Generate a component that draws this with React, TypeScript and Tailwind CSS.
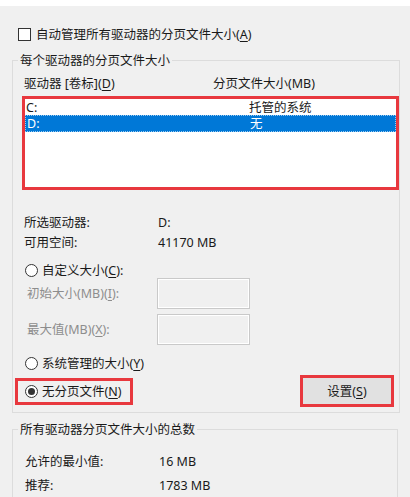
import React from 'react';

// Virtual memory dialog (Windows) — paging file settings per drive.

const RED = 'border-[#e8383e]';

function Key({ k }: { k: string }) {
    return <>(<span className="underline underline-offset-2">{k}</span>)</>;
}

function Radio({ checked = false }: { checked?: boolean }) {
    return (
        <span className="w-[13px] h-[13px] rounded-full border border-[#333] bg-white flex items-center justify-center shrink-0">
            {checked && <span className="w-[7px] h-[7px] rounded-full bg-[#333]" />}
        </span>
    );
}

function InfoRow({ label, value, h = 'h-[20px]' }: { label: string; value: string; h?: string }) {
    return (
        <div className={`flex items-center ${h}`}>
            <span className="w-[134px]">{label}</span>
            <span>{value}</span>
        </div>
    );
}

function SizeInput({ label, k }: { label: string; k: string }) {
    return (
        <div className="flex items-center h-[31px] pl-[3px]">
            <span className="w-[130px] text-[#8d8d8d]">{label}<Key k={k} />:</span>
            <span className="w-[93px] h-[31px] border border-[#c9c9c9] bg-[#f0f0f0] shadow-[inset_0_0_0_1px_#ffffff]" />
        </div>
    );
}

export default function App() {
    const drives = [
        { drive: 'C:', size: '托管的系统', selected: false },
        { drive: 'D:', size: '无', selected: true },
    ];

    return (
        <div className="w-[410px] h-[497px] overflow-hidden bg-[#f0f0f0] text-[#1a1a1a] text-[12.5px] leading-[17px] font-['Noto_Sans','Noto_Sans_CJK_SC',sans-serif]">
            <div className="h-[6px] bg-white" />

            {/* auto manage */}
            <div className="mt-[20px] ml-[18px] flex items-center gap-[5px] h-[17px]">
                <span className="w-[13px] h-[13px] border border-[#333] bg-white shrink-0" />
                <span>自动管理所有驱动器的分页文件大小<Key k="A" /></span>
            </div>

            {/* per-drive group */}
            <fieldset className="mt-[9px] ml-[12px] w-[386px] border border-[#dcdcdc] pl-[11px] pb-[5px]">
                <legend className="-ml-[6px] px-[2px]">每个驱动器的分页文件大小</legend>

                <div className="mt-[6px] flex h-[17px]">
                    <span className="w-[189px]">驱动器 [卷标]<Key k="D" /></span>
                    <span>分页文件大小(MB)</span>
                </div>

                <div className={`mt-[4px] -ml-[2px] w-[377px] h-[94px] border-[3px] ${RED} bg-white`}>
                    {drives.map(d => (
                        <div
                            key={d.drive}
                            className={`flex items-center pl-[1px] ${d.selected
                                ? 'h-[17px] bg-[#0078d7] text-white border border-dotted border-[#9ccbf0]'
                                : 'h-[16px]'}`}
                        >
                            <span className="w-[223px]">{d.drive}</span>
                            <span>{d.size}</span>
                        </div>
                    ))}
                </div>

                <div className="mt-[22px]">
                    <InfoRow label="所选驱动器:" value="D:" />
                    <InfoRow label="可用空间:" value="41170 MB" />
                </div>

                <div className="mt-[10px] ml-[1px] flex items-center gap-[4px] h-[16px]">
                    <Radio />
                    <span>自定义大小<Key k="C" />:</span>
                </div>

                <SizeInput label="初始大小(MB)" k="I" />
                <div className="mt-[5px]">
                    <SizeInput label="最大值(MB)" k="X" />
                </div>

                <div className="mt-[10px] ml-[1px] flex items-center gap-[4px] h-[17px]">
                    <Radio />
                    <span>系统管理的大小<Key k="Y" /></span>
                </div>

                <div className="mt-[3px] mr-[5px] flex items-center justify-between h-[32px]">
                    <div className={`-ml-[9px] w-[118px] h-[27px] border-[3px] ${RED} pl-[7px] flex items-center gap-[4px]`}>
                        <Radio checked />
                        <span>无分页文件<Key k="N" /></span>
                    </div>
                    <button className={`w-[94px] h-[32px] border-[3px] ${RED} bg-[#e1e1e1] flex items-center justify-center`}>
                        设置<Key k="S" />
                    </button>
                </div>
            </fieldset>

            {/* totals group */}
            <fieldset className="mt-[8px] ml-[12px] w-[386px] h-[120px] border border-[#dcdcdc] pl-[12px]">
                <legend className="-ml-[7px] px-[2px]">所有驱动器分页文件大小的总数</legend>
                <div className="mt-[11px]">
                    <InfoRow label="允许的最小值:" value="16 MB" h="h-[24px]" />
                    <InfoRow label="推荐:" value="1783 MB" h="h-[24px]" />
                </div>
            </fieldset>
        </div>
    );
}
